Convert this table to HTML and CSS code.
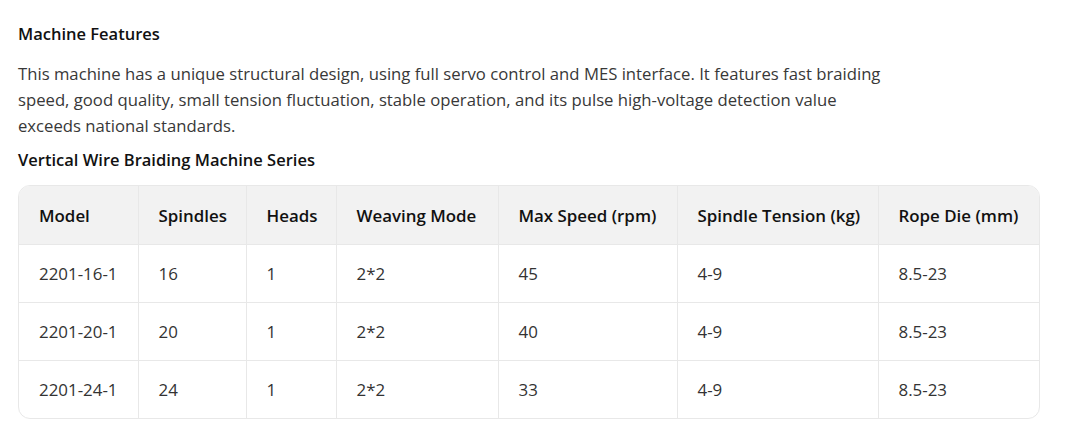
FILE: index.html
```html
<!DOCTYPE html>
<html>
<head>
<meta charset="utf-8">
<link rel="stylesheet" href="styles.css">
</head>
<body>
<div class="page">
  <h3 class="title">Machine Features</h3>
  <p class="desc">This machine has a unique structural design, using full servo control and MES interface. It features fast braiding speed, good quality, small tension fluctuation, stable operation, and its pulse high-voltage detection value exceeds national standards.</p>
  <h3 class="subtitle">Vertical Wire Braiding Machine Series</h3>
  <div class="table-wrap">
    <table class="spec">
      <colgroup>
        <col class="c1"><col class="c2"><col class="c3"><col class="c4"><col class="c5"><col class="c6"><col class="c7">
      </colgroup>
      <thead>
        <tr><th>Model</th><th>Spindles</th><th>Heads</th><th>Weaving Mode</th><th>Max Speed (rpm)</th><th>Spindle Tension (kg)</th><th>Rope Die (mm)</th></tr>
      </thead>
      <tbody>
        <tr><td>2201-16-1</td><td>16</td><td>1</td><td>2*2</td><td>45</td><td>4-9</td><td>8.5-23</td></tr>
        <tr><td>2201-20-1</td><td>20</td><td>1</td><td>2*2</td><td>40</td><td>4-9</td><td>8.5-23</td></tr>
        <tr><td>2201-24-1</td><td>24</td><td>1</td><td>2*2</td><td>33</td><td>4-9</td><td>8.5-23</td></tr>
      </tbody>
    </table>
  </div>
</div>
</body>
</html>
```
FILE: styles.css
```css
html, body {
  margin: 0;
  padding: 0;
  background: #fff;
}
.page {
  padding: 21px 36px 0 18px;
  font-family: "Open Sans", "Noto Sans", sans-serif;
  font-size: 16.9px;
  color: #333;
}
.title, .subtitle {
  margin: 0;
  font-size: 16.5px;
  font-weight: 600;
  line-height: 26px;
  color: #111;
}
.desc {
  margin: 14px 0 8px;
  max-width: 880px;
  font-size: 16.7px;
  line-height: 26px;
  color: #383838;
}
.table-wrap {
  margin-top: 12px;
  width: 1020px;
  border: 1px solid #e8e8e8;
  border-radius: 12px;
  overflow: hidden;
}
.spec {
  width: 100%;
  border-collapse: collapse;
  table-layout: fixed;
}
.c1 { width: 119px; }
.c2 { width: 108px; }
.c3 { width: 90px; }
.c4 { width: 162px; }
.c5 { width: 179px; }
.c6 { width: 201px; }
.c7 { width: auto; }
.spec th, .spec td {
  text-align: left;
  padding: 0 20px;
  white-space: nowrap;
  border-left: 1px solid #e8e8e8;
  border-bottom: 1px solid #e8e8e8;
}
.spec th:first-child, .spec td:first-child { border-left: none; }
.spec tbody tr:last-child td { border-bottom: none; }
.spec th {
  height: 58px;
  background: #f2f2f2;
  font-weight: 600;
  color: #111;
}
.spec td {
  height: 57px;
  color: #333;
}
```
